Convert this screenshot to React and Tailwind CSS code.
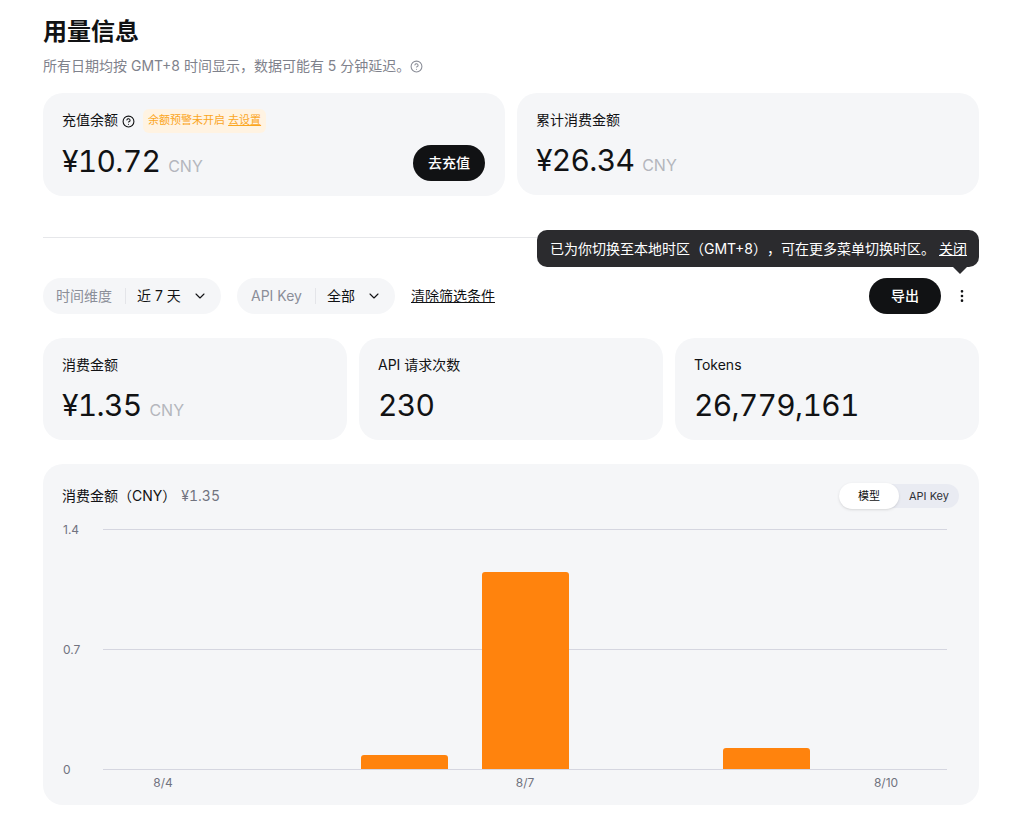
import { ChevronDown, CircleHelp, EllipsisVertical } from "lucide-react";

const font = "font-['Inter','Noto_Sans_CJK_SC',sans-serif]";

const Filter = ({ label, value, className }) => (
  <div className={`flex h-9 items-center rounded-full bg-[#f5f6f8] text-sm ${className}`}>
    <span className="text-[#8b8e98]">{label}</span>
    <span className="ml-[13px] mr-[11px] h-4 w-px bg-[#e4e5e9]" />
    <span className="text-[#111214]">{value}</span>
    <ChevronDown size={16} strokeWidth={1.6} className="ml-[11px] text-[#111214]" />
  </div>
);

const Stat = ({ label, value, unit }) => (
  <div className="h-[102px] rounded-[20px] bg-[#f5f6f8] pl-[19px] pr-5 pt-4">
    <div className="text-sm leading-[22px] text-[#111214]">{label}</div>
    <div className="mt-[9px] flex items-baseline text-[30px] leading-10 tracking-[-0.7px] text-[#111214] tabular-nums">
      {value}
      {unit && <span className="ml-2 text-base tracking-normal text-[#b4b6bd]">{unit}</span>}
    </div>
  </div>
);

const Chart = () => {
  const lines = [
    { y: 65, label: "1.4" },
    { y: 185, label: "0.7" },
    { y: 305, label: "0" },
  ];
  const bars = [
    { x: 318, w: 87, top: 291 },
    { x: 439, w: 87, top: 108 },
    { x: 680, w: 87, top: 284 },
  ];
  const ticks = [
    { x: 120, label: "8/4" },
    { x: 482, label: "8/7" },
    { x: 843, label: "8/10" },
  ];
  return (
    <svg width="936" height="341" className="absolute inset-0">
      {lines.map((l) => (
        <g key={l.label}>
          <line x1="60" x2="904" y1={l.y + 0.5} y2={l.y + 0.5} stroke="#d5d6e0" />
          <text x="20" y={l.y + 5} fontSize="12" fill="#71737f">{l.label}</text>
        </g>
      ))}
      {bars.map((b) => (
        <path
          key={b.x}
          d={`M${b.x} 305V${b.top + 3}a3 3 0 0 1 3-3H${b.x + b.w - 3}a3 3 0 0 1 3 3V305Z`}
          fill="#ff830d"
        />
      ))}
      {ticks.map((t) => (
        <text key={t.label} x={t.x} y="323" fontSize="12" fill="#71737f" textAnchor="middle">{t.label}</text>
      ))}
    </svg>
  );
};

export default function App() {
  return (
    <div className={`${font} relative min-h-[818px] bg-white pl-[43px] pr-[37px] text-[#111214]`}>
      <h1 className="pt-[15px] text-2xl leading-[34px] font-bold">用量信息</h1>
      <p className="mt-[6px] flex h-[22px] items-center text-sm text-[#7f828c]">
        所有日期均按 GMT+8 时间显示，数据可能有 5 分钟延迟。
        <CircleHelp size={13} className="text-[#8b8e98]" />
      </p>

      <div className="mt-4 grid grid-cols-2 items-start gap-3">
        <div className="h-[103px] rounded-[20px] bg-[#f5f6f8] pl-[19px] pr-5 pt-4">
          <div className="flex h-[24px] items-center text-sm">
            <span className="mb-[2px]">充值余额</span>
            <CircleHelp size={13} className="ml-[4px]" />
            <span className="ml-2 flex h-[24px] items-center rounded-md bg-[#fff3e2] px-[5px] text-[11px] text-[#fba61e]">
              余额预警未开启&nbsp;<span className="underline">去设置</span>
            </span>
          </div>
          <div className="mt-[5px] flex items-center justify-between">
            <div className="mt-[3px] flex items-baseline text-[30px] leading-10 tracking-[-0.7px] tabular-nums">
              ¥10.72
              <span className="ml-2 text-base tracking-normal text-[#b4b6bd]">CNY</span>
            </div>
            <button className="mt-[7px] h-9 w-[72px] rounded-full bg-[#111214] text-sm font-medium text-white">去充值</button>
          </div>
        </div>
        <Stat label="累计消费金额" value="¥26.34" unit="CNY" />
      </div>

      <div className="mt-[41px] h-px bg-[#e6e7ea]" />

      <div className="mt-10 flex h-9 items-center">
        <Filter label="时间维度" value="近 7 天" className="w-[178px] pl-[13px]" />
        <Filter label="API Key" value="全部" className="ml-4 w-[158px] pl-[14px]" />
        <span className="ml-4 text-sm underline">清除筛选条件</span>
        <button className="ml-auto h-9 w-[72px] rounded-full bg-[#111214] text-sm font-medium text-white">导出</button>
        <EllipsisVertical size={16} className="ml-[13px] mr-[9px]" />
      </div>

      <div className="mt-6 grid grid-cols-3 gap-3">
        <Stat label="消费金额" value="¥1.35" unit="CNY" />
        <Stat label="API 请求次数" value="230" />
        <Stat label="Tokens" value="26,779,161" />
      </div>

      <div className="relative mt-6 h-[341px] rounded-[20px] bg-[#f5f6f8] pl-[19px] pr-5 pt-5">
        <Chart />
        <div className="relative flex items-center justify-between">
          <div className="text-sm leading-6 [text-spacing-trim:space-all]">
            消费金额（CNY）<span className="ml-[5px] text-[#71737f] tabular-nums">¥1.35</span>
          </div>
          <div className="flex h-6 items-center rounded-full bg-[#e9ebf2] text-[11px]">
            <span className="flex h-[26px] w-[60px] items-center justify-center rounded-full bg-white shadow-sm">模型</span>
            <span className="w-[60px] text-center text-[#2f3138]">API Key</span>
          </div>
        </div>
      </div>

      {/* 时区提示 */}
      <div className="absolute left-[537px] top-[230px] flex h-[37px] w-[442px] items-center justify-between rounded-[10px] bg-[#2b2b2e] pl-[13px] pr-3 text-sm text-white [text-spacing-trim:space-all]">
        <span>已为你切换至本地时区（GMT+8），可在更多菜单切换时区。</span>
        <span className="underline">关闭</span>
        <span className="absolute bottom-[-7px] right-[11px] h-0 w-0 border-x-[8px] border-t-[8px] border-x-transparent border-t-[#2b2b2e]" />
      </div>
    </div>
  );
}
